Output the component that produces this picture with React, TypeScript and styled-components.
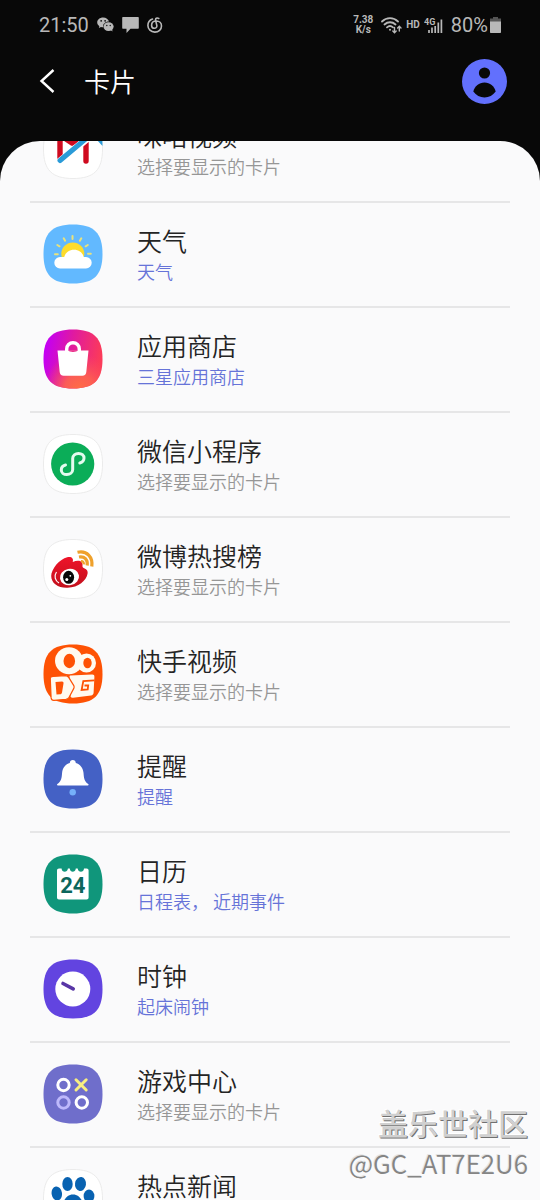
import React from 'react';
import styled, { createGlobalStyle } from 'styled-components';

const GlobalStyle = createGlobalStyle`
  * { box-sizing: border-box; }
  body {
    margin: 0;
    background: #080808;
    font-family: Roboto, "Noto Sans CJK SC", sans-serif;
  }
  button { font: inherit; color: inherit; background: none; border: 0; padding: 0; cursor: pointer; }
`;

const Screen = styled.div`
  position: relative;
  display: flex;
  flex-direction: column;
  height: 100vh;
  overflow: hidden;
`;

const StatusBar = styled.div`
  display: flex;
  justify-content: space-between;
  align-items: center;
  height: 50px;
  flex: none;
  padding: 0 39px;
  color: #b8b8b8;
  font-size: 20px;
  line-height: 24px;
`;

const StatusGroup = styled.div<{ $gap: number }>`
  display: flex;
  align-items: center;
  gap: ${(p) => p.$gap}px;
`;

const Speed = styled.span`
  padding-right: 4px;
  font-size: 10px;
  line-height: 10px;
  font-weight: 700;
  text-align: center;
`;

const Tiny = styled.span`
  font-size: 10px;
  line-height: 12px;
  font-weight: 700;
`;

const Battery = styled.span`
  display: flex;
  align-items: center;
  gap: 2px;
  margin-left: 4px;
`;

const AppBar = styled.header`
  display: flex;
  align-items: center;
  flex: none;
  height: 62px;
  margin-bottom: 29px;
  padding: 0 33px 0 32px;
  color: #fff;
`;

const IconButton = styled.button`
  display: flex;
  align-items: center;
  justify-content: center;
`;

const BackButton = styled(IconButton)`
  width: 30px;
  height: 45px;
`;

const Heading = styled.h1`
  flex: 1;
  margin: 0 0 0 22px;
  font-family: "Noto Sans CJK SC", sans-serif;
  font-size: 26px;
  line-height: 36px;
  font-weight: 350;
`;

const Panel = styled.main`
  flex: 1;
  min-height: 0;
  overflow: hidden;
  padding: 0 30px;
  border-radius: 40px 40px 0 0;
  background: #fafafb;
`;

const List = styled.ul`
  list-style: none;
  margin: -43px 0 0;
  padding: 0;
`;

const Item = styled.li`
  border-bottom: 2px solid #e6e6e7;
`;

const CardButton = styled.button`
  display: flex;
  align-items: center;
  gap: 34px;
  width: 100%;
  height: 103px;
  padding: 0 13px 2px;
  text-align: left;
`;

const Labels = styled.span`
  display: flex;
  flex-direction: column;
  padding-bottom: 2px;
  font-family: "Noto Sans CJK SC", sans-serif;
  font-weight: 350;
`;

const Name = styled.span`
  color: #242424;
  font-size: 25px;
  line-height: 36px;
`;

const Summary = styled.span<{ $active?: boolean }>`
  color: ${(p) => (p.$active ? '#6673d8' : '#969696')};
  font-size: 18px;
  line-height: 26px;
`;

const Watermark = styled.div`
  position: absolute;
  right: 12px;
  bottom: 18px;
  text-align: right;
  pointer-events: none;
`;

const Community = styled.div`
  color: #d0d0d0;
  font-size: 30px;
  line-height: 38px;
  font-weight: 500;
  text-shadow: 1px 1px 0 #707070, -1px -1px 0 #fff;
`;

const Handle = styled.div`
  color: #858585;
  font-family: "Noto Sans CJK SC", sans-serif;
  font-weight: 350;
  font-size: 26px;
  line-height: 38px;
  text-shadow: -1px -1px 0 #e4e4e4;
`;

const SQUIRCLE = 'M30 .5C51 .5 59.5 9 59.5 30S51 59.5 30 59.5.5 51 .5 30 9 .5 30 .5Z';

function Tile({ fill, outlined, children }: { fill: string; outlined?: boolean; children: React.ReactNode }) {
  return (
    <svg width="60" height="60" viewBox="0 0 60 60" fill="none" aria-hidden="true">
      <path d={SQUIRCLE} fill={fill} stroke={outlined ? '#ebebeb' : 'none'} />
      {children}
    </svg>
  );
}

const MiguIcon = () => (
  <Tile fill="#fff" outlined>
    <path d="M17 39V16L29 24 43 14V42" stroke="#cf0a1f" strokeWidth="5.400" strokeLinecap="round" strokeLinejoin="round" />
    <path d="M16 43 45 19" stroke="#fff" strokeWidth="7" />
    <path d="M17 41.500 45 18" stroke="#2a9bd8" strokeWidth="5" strokeLinecap="round" />
    <path d="M53 20h6.300l.2 7Z" fill="#2a9bd8" />
  </Tile>
);

const WeatherIcon = () => (
  <Tile fill="#62b9ff">
    <circle cx="29.800" cy="30" r="11.500" fill="#fddc2d" />
    <g stroke="#e9e27c" strokeWidth="2" strokeLinecap="round">
      <path d="M12 30.200h2.800M14.300 21l2.200 1.300M20.700 14.300l1.400 2.400M29.500 12v3M38.300 14.300l-1.400 2.400M44.800 21l-2.200 1.300M45 29.800h2.800" />
    </g>
    <path d="M17 44.500a5.700 5.700 0 0 1 0-11.400h4.200c1-4.200 4.800-7.300 9.800-7.300s8.700 3 9.800 7.300H43a5.700 5.700 0 0 1 0 11.400Z" fill="#fff" />
  </Tile>
);

const StoreIcon = () => (
  <Tile fill="url(#storeBase)">
    <defs>
      <linearGradient id="storeBase" x1="2" y1="24" x2="56" y2="34" gradientUnits="userSpaceOnUse">
        <stop offset="0" stopColor="#c400f2" />
        <stop offset=".45" stopColor="#e01aa0" />
        <stop offset="1" stopColor="#fb3a5a" />
      </linearGradient>
      <radialGradient id="storeGlow" cx="36" cy="60" r="36" gradientUnits="userSpaceOnUse">
        <stop offset="0" stopColor="#ff6c45" />
        <stop offset=".4" stopColor="#fd6350" stopOpacity=".9" />
        <stop offset="1" stopColor="#fb4a60" stopOpacity="0" />
      </radialGradient>
    </defs>
    <path d={SQUIRCLE} fill="url(#storeGlow)" />
    <path d="M14.500 21.500h31L43.300 43c-.2 2.400-1.500 3.700-4 3.700H20.700c-2.500 0-3.800-1.300-4-3.700Z" fill="#fff" />
    <path d="M23.700 23v-3a6.200 6.200 0 0 1 12.600 0v3" stroke="#fff" strokeWidth="3.400" />
    <path d="M25.200 21.300h9.600c-1 2.200-8.600 2.200-9.600 0Z" fill="#e92a86" />
  </Tile>
);

const MiniProgramIcon = () => (
  <Tile fill="#fff" outlined>
    <circle cx="29.700" cy="30" r="21.600" fill="#0bad58" />
    <path
      d="M22.500 31c-2.700.7-4.200 2.600-4.200 4.900 0 2.700 2.400 4.700 5.500 4.700s5.900-2.100 5.900-5.100v-11c0-3 2.600-5.100 5.800-5.100s5.500 2 5.500 4.700c0 2.400-1.500 4.200-4.200 4.900"
      stroke="#e4fbef" strokeWidth="3" strokeLinecap="round"
    />
  </Tile>
);

const WeiboIcon = () => (
  <Tile fill="#fff" outlined>
    <defs>
      <linearGradient id="weiboBody" x1="0" y1="17" x2="0" y2="49" gradientUnits="userSpaceOnUse">
        <stop offset="0" stopColor="#f0142a" />
        <stop offset="1" stopColor="#c2101c" />
      </linearGradient>
    </defs>
    <path d="M8.200 37c0-7 8.500-17.200 16-18.800 4.500-.9 6.600 1.300 5.500 4.800 5.800-2.400 10.500-1.200 9.800 3.800-.1 1.400.3 2 1.700 2.500 3 1.100 3.800 3 3.400 5.300-1.200 7.300-9.200 13.900-20 14.200C15.700 49.300 8.200 44.500 8.200 37Z" fill="url(#weiboBody)" />
    <path d="M13.500 33c-2.700 4-1.500 8.400 2.500 11" stroke="#fff" strokeWidth="1.200" />
    <ellipse cx="26.500" cy="38" rx="9.600" ry="8.200" fill="#fff" transform="rotate(-10 26.500 38)" />
    <ellipse cx="25.600" cy="38.300" rx="5.500" ry="6.500" fill="#080808" />
    <circle cx="23.800" cy="40.400" r="1.500" fill="#fff" />
    <circle cx="27.300" cy="36.800" r=".9" fill="#fff" />
    <g stroke="#efa12c" strokeWidth="3.200">
      <path d="M34.500 13.300c9.500-2 15.500 4.500 14.300 14.200" />
      <path d="M36 18c5.500-1 9 2.600 8.200 8.500" />
      <path d="M38 22.300c2-.2 3 1 2.800 3" strokeWidth="2.400" />
    </g>
  </Tile>
);

const KuaishouIcon = () => (
  <Tile fill="#fe5204">
    <g fill="#fffaf0">
      <ellipse cx="26" cy="16.800" rx="14" ry="13.500" />
      <circle cx="43.500" cy="19" r="9.500" />
      <path d="M26.500 32.500c0-.6.500-.9 1.200-1L49 30.500c1.700-.1 2.500.7 2.400 2.400l-.8 15.800c-.1 1.600-1 2.500-2.600 2.700l-18 2.300c-2 .2-3-.8-2.300-2.500Z" />
      <path d="M10 32.400 22.500 31.600c1.500 0 2.400.6 3.200 1.800l5.100 8.200c.5 1 .5 1.800 0 2.800l-4.700 8.800c-.8 1.400-1.700 2-3.200 2.200L11 56.300c-1.700.1-2.700-.7-2.900-2.400L7.300 35.100c-.1-1.700.8-2.600 2.700-2.700Z" stroke="#fe5204" strokeWidth="1.200" />
    </g>
    <g fill="#fe5204">
      <ellipse cx="26.300" cy="17" rx="5.800" ry="7.200" />
      <ellipse cx="44.500" cy="19" rx="4.200" ry="5.200" />
      <path d="M12.500 38l6.500-.4c1.200.1 1.600.6 1.500 1.800l-1.500 9c-.2 1.200-.9 1.700-2 1.800l-3.500.2Z" />
    </g>
    <path d="M51.500 36.400 40.300 37.200 38.600 46 44.700 45.500 45.200 41.500H41.500" stroke="#fe5204" strokeWidth="1.800" />
  </Tile>
);

const ReminderIcon = () => (
  <Tile fill="#4461c5">
    <path d="M26.800 14c0-1.900 1.300-3.100 3-3.100s3 1.200 3 3.100c4.200 1.300 7.200 4.700 7.700 9.700.4 5 .6 8.300 4.700 11.300.6.500.5 1.500-.5 1.500H14.900c-1 0-1.100-1-.5-1.500 4.100-3 4.300-6.300 4.700-11.300.5-5 3.500-8.400 7.700-9.700Z" fill="#fff" />
    <circle cx="29.700" cy="43.300" r="3.200" fill="#75b0fa" />
  </Tile>
);

const CalendarIcon = () => (
  <Tile fill="#10967b">
    <path d="M16 14.500h2.600c.2 4.300 5.900 4.300 6.300 0h1.900c.3 4.300 5.600 4.300 6 0h1.900c.4 4.300 6.100 4.300 6.300 0h2.600c1.200 0 2 .8 2 2v27c0 1.200-.8 2-2 2H16c-1.200 0-2-.8-2-2v-27c0-1.200.8-2 2-2Z" fill="#fff" />
    <text x="29.800" y="38.500" textAnchor="middle" fontFamily="Roboto, sans-serif" fontWeight="700" fontSize="22" fill="#0c665c">24</text>
  </Tile>
);

const ClockIcon = () => (
  <Tile fill="#6244e0">
    <circle cx="29.800" cy="30" r="17.500" fill="#fff" />
    <path d="M20 24.500 30.200 29.800" stroke="#5936a6" strokeWidth="3.600" strokeLinecap="round" />
  </Tile>
);

const GameIcon = () => (
  <Tile fill="#6f6ecb">
    <g strokeWidth="3">
      <circle cx="20.500" cy="21" r="5.700" stroke="#fff" />
      <circle cx="20.500" cy="38.500" r="5.700" stroke="#bdb8fb" />
      <circle cx="38.800" cy="38.500" r="5.700" stroke="#fff" />
      <path d="M33 15.800 43.200 26M43.200 15.800 33 26" stroke="#f8ee82" strokeLinecap="round" />
    </g>
  </Tile>
);

const NewsIcon = () => (
  <Tile fill="#fff" outlined>
    <g fill="#0862b1">
      <ellipse cx="24.500" cy="15" rx="5.200" ry="7" />
      <ellipse cx="37.500" cy="15" rx="5.500" ry="7" transform="rotate(8 37.500 15)" />
      <ellipse cx="13.800" cy="24.500" rx="5.200" ry="7" transform="rotate(-8 13.800 24.500)" />
      <ellipse cx="46" cy="27" rx="5.400" ry="6.500" />
      <path d="M30 25.500c7 0 8 6 13 11 6 6 3 14-5 13.500-5-.5-11-.5-16 0-8 .5-11-8-5-13.500 5-5 6-11 13-11Z" />
    </g>
  </Tile>
);

const PICK = '选择要显示的卡片';

const cards: { name: string; summary: string; active?: boolean; Icon: () => React.JSX.Element }[] = [
  { name: '咪咕视频', summary: PICK, Icon: MiguIcon },
  { name: '天气', summary: '天气', active: true, Icon: WeatherIcon },
  { name: '应用商店', summary: '三星应用商店', active: true, Icon: StoreIcon },
  { name: '微信小程序', summary: PICK, Icon: MiniProgramIcon },
  { name: '微博热搜榜', summary: PICK, Icon: WeiboIcon },
  { name: '快手视频', summary: PICK, Icon: KuaishouIcon },
  { name: '提醒', summary: '提醒', active: true, Icon: ReminderIcon },
  { name: '日历', summary: '日程表， 近期事件', active: true, Icon: CalendarIcon },
  { name: '时钟', summary: '起床闹钟', active: true, Icon: ClockIcon },
  { name: '游戏中心', summary: PICK, Icon: GameIcon },
  { name: '热点新闻', summary: PICK, Icon: NewsIcon },
];

const WechatGlyph = () => (
  <svg width="17" height="16" viewBox="0 0 18 16" aria-hidden="true">
    <path d="M6.500 0C2.900 0 .2 2.300.2 5.200c0 1.700.9 3.100 2.300 4.100L2 11.200l2.200-1.100c.7.200 1.400.3 2.200.3C6 6.800 8.700 4.200 12.700 4.200 12.100 1.800 9.600 0 6.500 0Z" fill="#b8b8b8" />
    <ellipse cx="12.200" cy="9.700" rx="5.400" ry="4.600" fill="#b8b8b8" />
    <path d="m14 13 2.400 2-.4-3Z" fill="#b8b8b8" />
    <g fill="#080808">
      <circle cx="4.400" cy="3.600" r=".9" />
      <circle cx="8.600" cy="3.600" r=".9" />
      <circle cx="10.400" cy="8.500" r=".7" />
      <circle cx="14" cy="8.500" r=".7" />
    </g>
  </svg>
);

const MessageGlyph = () => (
  <svg width="17" height="16" viewBox="0 0 17 16" aria-hidden="true">
    <path d="M1.200 0h14.600c.7 0 1 .4 1 1v9.800c0 .7-.3 1-1 1H8.500L4.500 16v-4.200H1.200c-.7 0-1-.3-1-1V1c0-.6.3-1 1-1Z" fill="#b8b8b8" />
  </svg>
);

const MusicGlyph = () => (
  <svg width="16" height="16" viewBox="0 0 16 16" fill="none" stroke="#b8b8b8" strokeWidth="1.600" strokeLinecap="round" aria-hidden="true">
    <path d="M5.500 2C2.600 3 .9 5.600.9 8.500c0 3.700 3 6.600 6.900 6.600s6.700-2.700 6.700-6.100c0-3-2.200-5-5.200-5-2.800 0-4.700 1.800-4.700 4.200 0 1.900 1.200 3.100 2.800 3.100s2.700-1.200 2.400-2.900L8.600 3.300C8.300 1.400 9.800.5 11.800 1.500" />
  </svg>
);

const WifiGlyph = () => (
  <svg width="21" height="17" viewBox="0 0 21 17" fill="none" stroke="#b8b8b8" strokeWidth="1.800" strokeLinecap="round" aria-hidden="true">
    <path d="M1 4.500c4.500-4.400 11.500-4.400 16 0M3.500 7.500c3.200-3 7.800-3 11 0M6 10.300c1.800-1.600 4.200-1.600 6 0" />
    <circle cx="9" cy="12.700" r="1" fill="#b8b8b8" stroke="none" />
    <path d="M13.500 10.500v5M11.800 14l1.700 1.700 1.700-1.700M18.300 14V9.500M16.600 11l1.700-1.700L20 11" strokeWidth="1.400" />
  </svg>
);

const SignalGlyph = () => (
  <svg width="19" height="17" viewBox="0 0 19 17" aria-hidden="true">
    <text x="0" y="8" fontFamily="Roboto, sans-serif" fontSize="9" fontWeight="700" fill="#b8b8b8">4G</text>
    <path d="M5 16v-3M8 16v-5.500M11.200 16V9M14.300 16V5.500M17.400 16V2.500" stroke="#b8b8b8" strokeWidth="1.700" />
  </svg>
);

const BatteryGlyph = () => (
  <svg width="11" height="16" viewBox="0 0 11 16" aria-hidden="true">
    <path d="M3 0h5v1.500h3V5H0V1.500h3Z" fill="#555" />
    <path d="M0 4.500h11V15c0 .6-.4 1-1 1H1c-.6 0-1-.4-1-1Z" fill="#b8b8b8" />
  </svg>
);

export default function App() {
  return (
    <Screen>
      <GlobalStyle />
      <StatusBar>
        <StatusGroup $gap={8}>
          <span>21:50</span>
          <WechatGlyph />
          <MessageGlyph />
          <MusicGlyph />
        </StatusGroup>
        <StatusGroup $gap={4}>
          <Speed>7.38<br />K/s</Speed>
          <WifiGlyph />
          <Tiny>HD</Tiny>
          <SignalGlyph />
          <Battery>80%<BatteryGlyph /></Battery>
        </StatusGroup>
      </StatusBar>
      <AppBar>
        <BackButton aria-label="返回">
          <svg width="16" height="24" viewBox="0 0 16 24" fill="none" stroke="#fff" strokeWidth="2.400" aria-hidden="true">
            <path d="M14.500 1 2.500 12l12 11" />
          </svg>
        </BackButton>
        <Heading>卡片</Heading>
        <IconButton aria-label="账户">
          <svg width="45" height="45" viewBox="0 0 45 45" aria-hidden="true">
            <circle cx="22.500" cy="22.500" r="22.500" fill="#6270fd" />
            <circle cx="22.500" cy="14" r="5.600" fill="#080808" />
            <path d="M11.300 32.500c1.500-5.500 5.700-9 11.200-9s9.700 3.500 11.200 9c-2.800 3.800-6.700 6-11.200 6s-8.400-2.200-11.200-6Z" fill="#080808" />
          </svg>
        </IconButton>
      </AppBar>
      <Panel>
        <List>
          {cards.map(({ name, summary, active, Icon }) => (
            <Item key={name}>
              <CardButton>
                <Icon />
                <Labels>
                  <Name>{name}</Name>
                  <Summary $active={active}>{summary}</Summary>
                </Labels>
              </CardButton>
            </Item>
          ))}
        </List>
      </Panel>
      <Watermark>
        <Community>盖乐世社区</Community>
        <Handle>@GC_AT7E2U6</Handle>
      </Watermark>
    </Screen>
  );
}
